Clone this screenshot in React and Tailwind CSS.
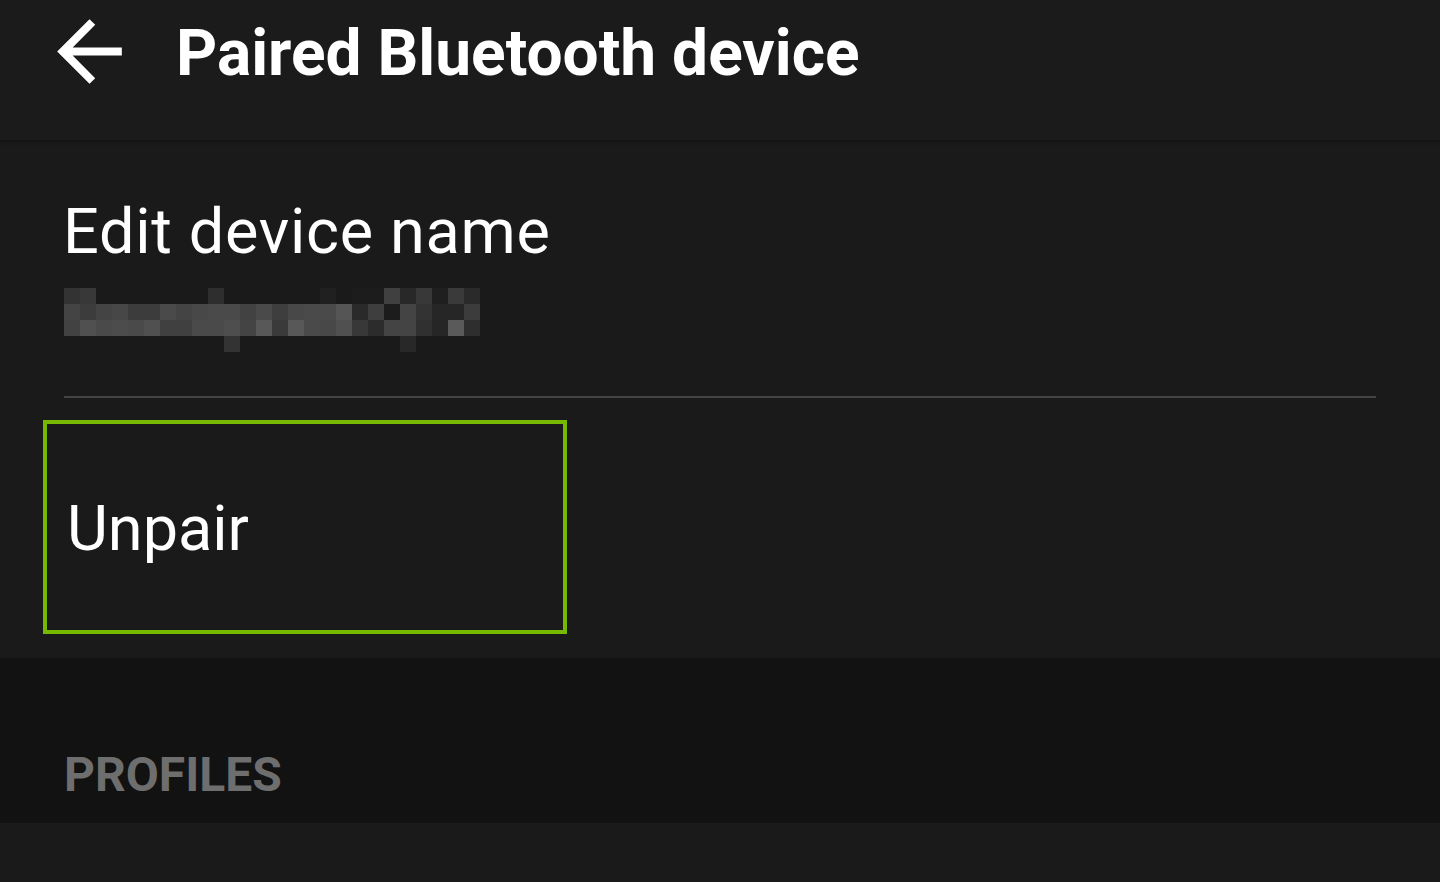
import React from "react";

// blurred device name, 26 x 4 cells of 16px
const BLUR = [
  ["333", "383838", "", "", "", "", "", "", "", "2e2e2e", "", "", "", "", "", "", "202020", "", "1c1c1c", "1c1c1c", "404040", "282828", "383838", "1f1f1f", "3a3a3a", "2a2a2a"],
  ["444", "3c3c3c", "444", "474747", "3c3c3c", "3c3c3c", "4a4a4a", "444", "484848", "4a4a4a", "4a4a4a", "424242", "4a4a4a", "3e3e3e", "484848", "4a4a4a", "4a4a4a", "555", "2a2a2a", "3e3e3e", "1c1c1c", "444", "333", "262626", "262626", "3c3c3c"],
  ["424242", "505050", "4a4a4a", "4c4c4c", "4a4a4a", "505050", "404040", "404040", "4a4a4a", "4a4a4a", "4e4e4e", "444", "585858", "3a3a3a", "585858", "4a4a4a", "484848", "505050", "383838", "2c2c2c", "444", "444", "303030", "262626", "5a5a5a", "2e2e2e"],
  ["", "", "", "", "", "", "", "", "", "", "333", "", "", "", "", "", "", "", "", "", "", "282828", "", "", "", ""],
];

function BackArrow() {
  return (
    <svg width="97" height="97" viewBox="0 0 24 24" fill="#fff">
      <path d="M20 11H7.83l5.59-5.59L12 4l-8 8 8 8 1.41-1.41L7.83 13H20v-2z" />
    </svg>
  );
}

function BlurredName() {
  return (
    <div className="flex flex-col">
      {BLUR.map((row, r) => (
        <div key={r} className="flex">
          {row.map((c, i) => (
            <div key={i} className="w-4 h-4" style={{ background: c ? `#${c}` : "transparent" }} />
          ))}
        </div>
      ))}
    </div>
  );
}

export default function App() {
  return (
    <div className="w-[1440px] h-[882px] bg-[#1a1a1a] overflow-hidden text-white" style={{ fontFamily: "Roboto, 'Open Sans', sans-serif" }}>
      {/* Toolbar */}
      <header className="h-[140px] bg-[#1b1b1b] relative">
        <div className="h-[108px] flex items-center">
          <div className="ml-[41px] -mt-[6px]">
            <BackArrow />
          </div>
          <h1 className="ml-[38px] text-[64px] leading-none font-bold">Paired Bluetooth device</h1>
        </div>
        <div className="absolute left-0 right-0 -bottom-[6px] h-[6px] bg-gradient-to-b from-[#141414] to-[#1a1a1a]" />
      </header>

      {/* Device section */}
      <section className="pl-[63px] pr-[64px] pt-[60px]">
        <p className="text-[63px] leading-none tracking-[0.7px]">Edit device name</p>
        <div className="mt-[25px] ml-px">
          <BlurredName />
        </div>
        <div className="mt-[44px] ml-px h-[2px] bg-[#444]" />
      </section>

      <div className="pt-[22px] pb-[24px] pl-[43px]">
        <div className="w-[524px] h-[214px] border-4 border-[#76b900] pl-[20px] pt-[73px]">
          <p className="text-[63px] leading-none">Unpair</p>
        </div>
      </div>

      {/* Profiles header */}
      <section className="h-[165px] bg-[#121212] pl-[64px] pt-[93px]">
        <h2 className="text-[48px] leading-none font-bold text-[#6e6e6e]">PROFILES</h2>
      </section>
    </div>
  );
}
